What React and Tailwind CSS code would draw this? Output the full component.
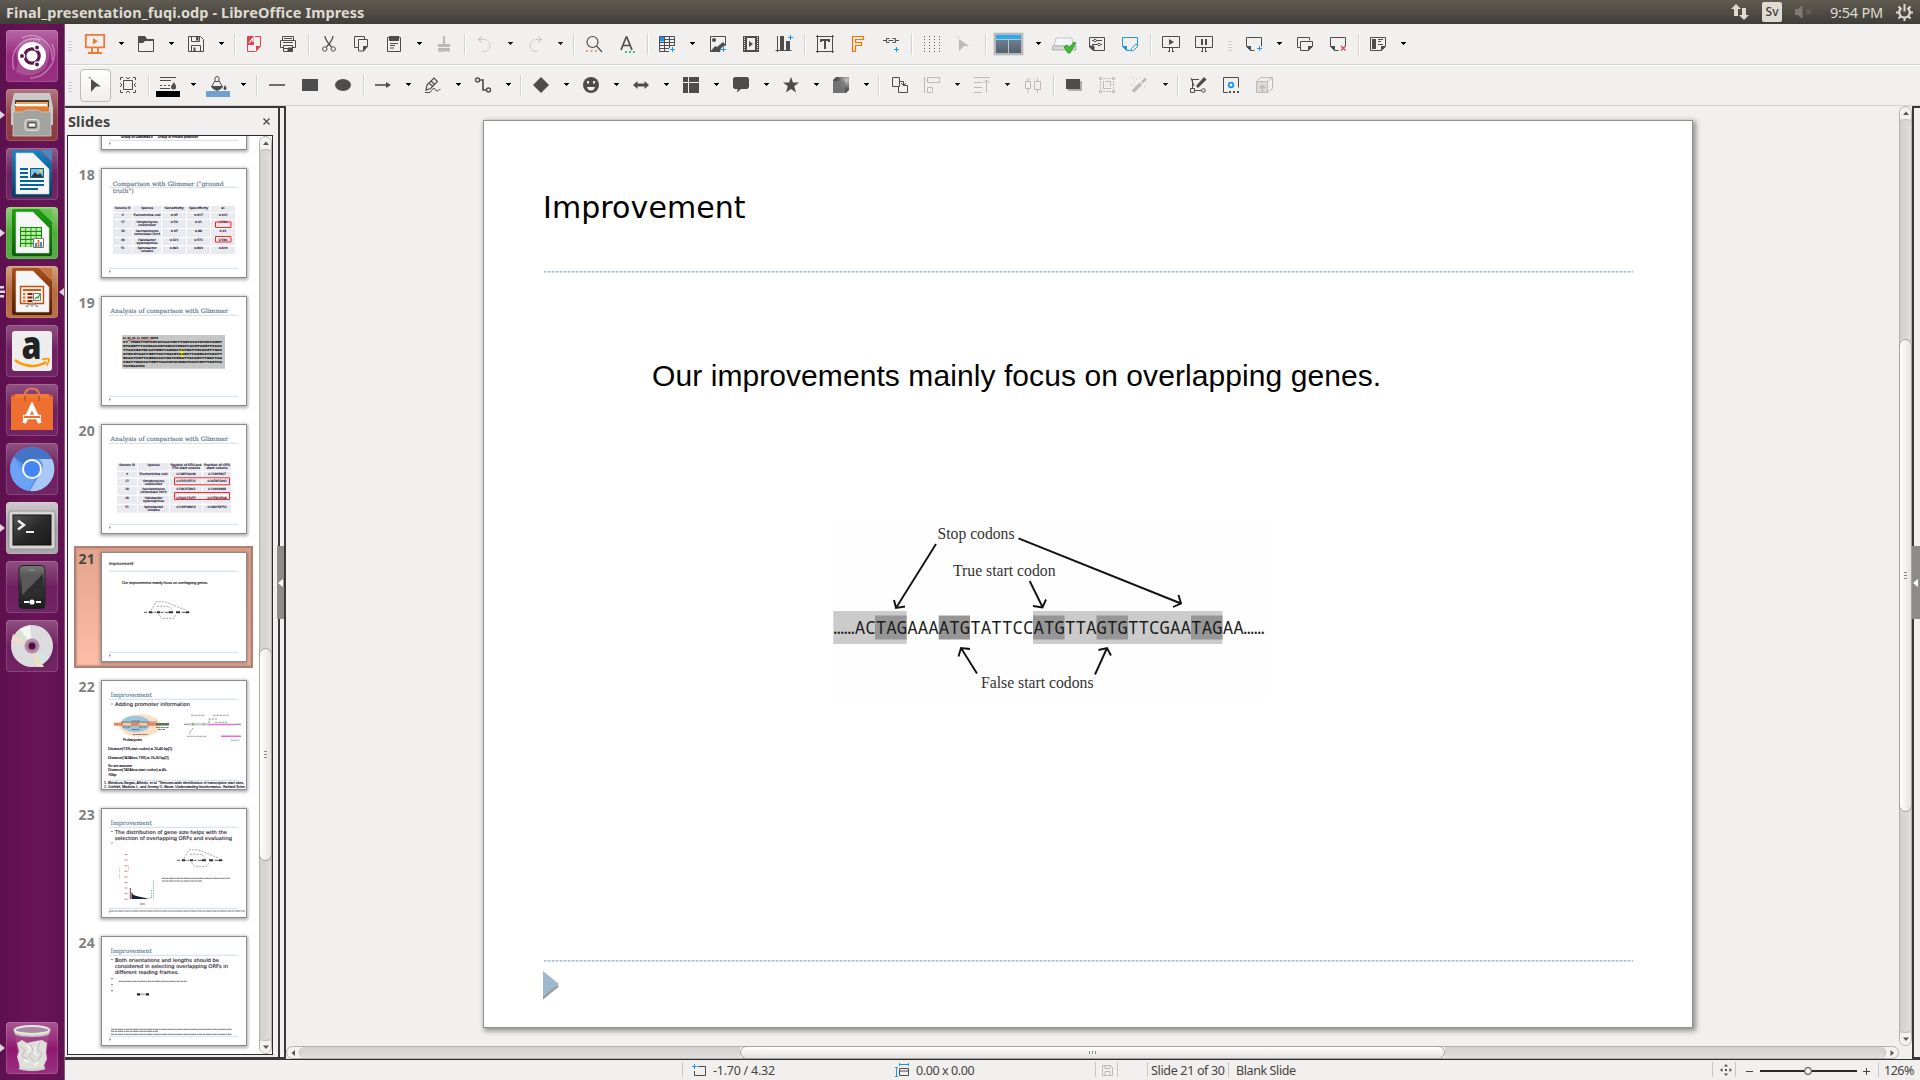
import React from "react";

const D = "#4d4d4d";
const G = "#bcbab8";
const B = "#1e96f0";

/* ---------- toolbar building blocks ---------- */

const Ico = ({ children }) => (
  <div className="flex w-[33px] shrink-0 pl-1">
    <svg width="24" height="24" viewBox="-4 -4 24 24" fill="none" className="overflow-visible">
      {children}
    </svg>
  </div>
);
const Drop = ({ wide, dim }) => (
  <div className={wide ? "w-[18px] shrink-0 pl-[6px]" : "w-[17px] shrink-0 pl-[6px]"}>
    <svg width="5" height="3" viewBox="0 0 5 3" shapeRendering="crispEdges" className="-mt-px block">
      <path d="M0 0h5v1H4v1H3v1H2V2H1V1H0z" fill={dim ? "#222" : "#000"} />
    </svg>
  </div>
);
const sepWidths = { 7: "w-[7px] pl-[3px]", 8: "w-2 pl-[3px]", 9: "w-[9px] pl-1" };
const Sep = ({ w = 8 }) => (
  <div className={`${sepWidths[w]} shrink-0`}>
    <div className="h-[21px] w-[2px] border-l border-[#d5d3d1] bg-white" />
  </div>
);
const Grip = () => (
  <div className="flex w-1 shrink-0 flex-col gap-[2px] pt-[3px]">
    <i className="h-px bg-[#cfcdcb]" />
    <i className="h-px bg-[#cfcdcb]" />
    <i className="h-px bg-[#cfcdcb]" />
    <i className="h-px bg-[#cfcdcb]" />
  </div>
);
const Plus = ({ x, y, c = B }) => <path d={`M${x - 2.5} ${y}h5M${x} ${y - 2.5}v5`} stroke={c} />;
const Sheet = ({ c = D, x = 0, y = 1 }) => (
  <g transform={`translate(${x} ${y})`}>
    <path d="M4.5 13.5 L.5 9.5V.5h15v9M4.5 13.5h4" stroke={c} />
    <path d="M0 9h5v5z" fill={c} />
  </g>
);

/* ---------- standard toolbar icons ---------- */

const StartShow = () => (
  <Ico>
    <g transform="translate(-1 0)">
      <path d="M-1.2 -1.2h18.4v12.6H-1.2z" stroke="#ee7a35" strokeWidth="1.8" />
      <path d="M6 2l5 3.2L6 8.6z" fill="#ee7a35" />
      <path d="M5 12v4M11 12v4M1 17h14" stroke="#ee7a35" strokeWidth="1.8" />
    </g>
  </Ico>
);
const Open = () => (
  <Ico>
    <path d="M.5 .5h6l2 3h7v12H.5z" stroke={D} />
    <path d="M0 0h7l2 3h7v2H7L5 7H0z" fill={D} />
  </Ico>
);
const Save = () => (
  <Ico>
    <path d="M.5 .5h12l3 3v12H.5z" stroke={D} />
    <path d="M3.5 .5v5h8v-5M3.5 15.5v-6h9v6" stroke={D} />
    <path d="M8 1h2.5v3.5H8zM5.5 11.5h2V15h-2z" fill={D} />
  </Ico>
);
const Pdf = () => (
  <Ico>
    <path d="M0 9h7V0H0z" fill="#da4453" />
    <path d="M2 7l4-5v4" stroke="#fff" strokeWidth="1.2" />
    <path d="M8 .5h5.5v10M8.5 15.500h-8V9" stroke="#da4453" />
    <path d="M14 10H9v6z" fill="#da4453" />
  </Ico>
);
const Print = () => (
  <Ico>
    <path d="M2.5 4.5v-4h11v4M.5 4.5h15v7H.5z" stroke={D} />
    <path d="M4 2.5h8M3 6.5h10" stroke={D} />
    <path d="M3.500 9.500h9v6h-9z" fill="#f1f0ee" stroke={D} />
    <path d="M4 12.500h8M8 12h4v3H8z" stroke={D} fill={D} />
  </Ico>
);
const Cut = () => (
  <Ico>
    <g transform="translate(2 0)">
      <path d="M3 0c0 3 2 6 6.500 11M11 0c0 3-2 6-6.500 11" stroke={D} strokeWidth="1.3" />
      <circle cx="2.800" cy="13" r="2.200" stroke={D} />
      <circle cx="11.200" cy="13" r="2.200" stroke={D} />
    </g>
  </Ico>
);
const Copy = () => (
  <Ico>
    <g transform="translate(1 0)">
      <path d="M5 11.500H.5V.5h10v2.500" stroke={D} />
      <path d="M4.500 3.500h9v7l-4 4.500h-5z" stroke={D} />
      <path d="M14 10H9v6z" fill={D} />
    </g>
  </Ico>
);
const Paste = () => (
  <Ico>
    <path d="M1.500 1.500h13v14h-13z" stroke={D} />
    <path d="M3 0h10v5H3z" fill={D} />
    <path d="M4 7.500h8M4 9.500h5M4 12h4" stroke={D} />
  </Ico>
);
const Brush = () => (
  <Ico>
    <path d="M7 0h2v8h5v3H2V8h5zM2 12h12v3.500H2z" fill={G} />
    <path d="M5 16L2 15v-3h10z" fill={G} />
  </Ico>
);
const Undo = ({ flip }) => (
  <Ico>
    <g transform={flip ? "translate(16 0) scale(-1 1)" : undefined}>
      <path d="M2 3.500h5a6 6 0 0 1 0 12H5" stroke={G} strokeDasharray="2 1" />
      <path d="M5 .5l-3.500 3L5 6.500" stroke={G} />
    </g>
  </Ico>
);
const Find = () => (
  <Ico>
    <circle cx="6.500" cy="6" r="5.500" stroke={D} strokeWidth="1.200" />
    <path d="M10.500 10l5.500 6" stroke={D} strokeWidth="1.200" />
    <path d="M0 15h2M4.500 15h2M9 15h2" stroke="#f3937f" strokeWidth="2" />
  </Ico>
);
const Spell = () => (
  <Ico>
    <path d="M2 14L7.200 1h.6L13 14M4 9.500h7" stroke={D} strokeWidth="1.700" />
    <path d="M6 16h2M10 16h2M14 16h2" stroke="#4fb87a" strokeWidth="2" />
  </Ico>
);
const Table = () => (
  <Ico>
    <path d="M.5 .5h15v9.500M.5 .5v15H10M0 3.500h16M0 6.500h16M0 9.500h15M0 12.500h10M5.500 0v16M10.500 0v12" stroke={D} />
    <path d="M1 1h4v4.500H1z" fill={B} />
    <Plus x={13.500} y={13.500} />
  </Ico>
);
const Image = () => (
  <Ico>
    <path d="M9 15.500H.5V.5h15v9" stroke={D} />
    <circle cx="4" cy="4" r="2" fill={D} />
    <path d="M0 16l5-6 2 1 6-5 3 3-5 3-1 4z" fill={D} />
    <Plus x={13.500} y={13.500} />
  </Ico>
);
const Film = () => (
  <Ico>
    <path d="M0 0h16v16H0z" fill={D} />
    <path d="M4 2h8v12H4z" fill="#f1f0ee" />
    <path d="M1.500 1v14M14.500 1v14" stroke="#f1f0ee" strokeDasharray="1 1" />
    <path d="M6 5l4 3-4 3z" fill={D} />
  </Ico>
);
const Chart = () => (
  <Ico>
    <path d="M-.5 14.500h16M1.500 0v16" stroke={D} />
    <path d="M4 0h4v14H4zM10 5h4v9h-4z" fill={D} />
    <Plus x={14.500} y={1.500} />
  </Ico>
);
const TextBox = () => (
  <Ico>
    <path d="M.5 -1v18M15.500 -1v18M-1 .5h18M-1 15.500h18" stroke={D} />
    <path d="M3 3h10v3h-2V5H9v8H7V5H5v1H3z" fill={D} />
  </Ico>
);
const Fontwork = () => (
  <Ico>
    <path d="M2.500 .5h11v3h-8v3h6v3h-6v6h-3z" stroke="#f67400" strokeWidth="1.200" />
  </Ico>
);
const Link = () => (
  <Ico>
    <path d="M0 4.500h3M6.500 2.500h-3v4h3M5.500 4.500h5M9.500 2.500h3v4h-3M13 4.500h3" stroke={D} />
    <Plus x={13.500} y={13.500} />
  </Ico>
);
const Dots = () => (
  <Ico>
    <path d="M.5 0v16M5.500 0v16M10.500 0v16M15.500 0v16" stroke="#5a5a5a" strokeDasharray="1 2" />
  </Ico>
);
const GreyCursor = () => (
  <Ico>
    <path d="M2 3l10 7H7l-5 5z" fill={G} />
    <path d="M0 0h2v2H0z" fill="#dddbd9" />
  </Ico>
);
const Display = () => (
  <div className="flex w-10 shrink-0 pl-1">
    <div className="flex h-[22px] w-[29px] flex-col gap-px border-2 border-[#b9b8b7] bg-[#bfc3c6] shadow-[0_0_0_0.5px_#ccc]">
      <i className="h-1 bg-[#27a9f3]" />
      <div className="flex flex-1 gap-px">
        <i className="flex-1 bg-linear-to-b from-[#6e7f90] to-[#53616e]" />
        <i className="flex-1 bg-linear-to-b from-[#6e7f90] to-[#53616e]" />
      </div>
    </div>
  </div>
);
const Check = () => (
  <Ico>
    <path d="M0 2h16l1 8H-2z" fill="#f4f4fb" stroke="#b5b5b8" strokeWidth=".7" />
    <path d="M-3 10h23v4H-4z" fill="#d8d8d8" stroke="#8f8f8f" strokeWidth=".6" />
    <path d="M8 11l3-2 2 3 5-6 2 1-6 10h-2z" fill="#3fc12f" stroke="#1f8a18" strokeWidth=".7" />
  </Ico>
);
const Props = () => (
  <Ico>
    <path d="M4 14.500L.5 11V1.500h15v13H4z" stroke={D} />
    <path d="M0 10h5v5zM3 4.500h10M3 8.500h10" fill={D} stroke={D} />
    <circle cx="6" cy="4.500" r="1.300" fill="#fff" stroke={D} />
    <circle cx="10" cy="8.500" r="1.300" fill="#fff" stroke={D} />
  </Ico>
);
const Master = () => (
  <Ico>
    <Sheet c={B} />
    <path d="M9 15l.5-2.500L14 8l2 2-4.500 4.500z" stroke={B} fill="#f1f0ee" />
  </Ico>
);
const Present = ({ pause }) => (
  <Ico>
    <path d="M-.5 .5h17v11h-17z" stroke={D} />
    <path d="M6.500 12v3M9.500 12v3M5 15.500h2M9 15.500h2" stroke={D} />
    {pause ? <path d="M5 3h2v6H5zM9 3h2v6H9z" fill={D} /> : <path d="M6 3l5 3-5 3z" fill={D} />}
  </Ico>
);
const NewSlide = () => (
  <Ico>
    <Sheet />
    <Plus x={13.500} y={12.500} />
  </Ico>
);
const DupSlide = () => (
  <Ico>
    <path d="M3 11.500H.5V1.500h12v3" stroke={D} />
    <path d="M3.500 5.500h12v5l-4 4h-8z" stroke={D} />
    <path d="M16 10h-5v5z" fill={D} />
  </Ico>
);
const DelSlide = () => (
  <Ico>
    <Sheet />
    <path d="M11 10l4.500 4.500M15.500 10L11 14.500" stroke="#da4453" strokeWidth="1.300" />
  </Ico>
);
const Layout = () => (
  <Ico>
    <path d="M.5 1.500h15v9l-4 4H.5z" stroke={D} />
    <path d="M2 3h4v10H2zM16 10h-5v5z" fill={D} />
    <path d="M8 3.500h5M8 5.500h3M8 8.500h5" stroke={D} />
  </Ico>
);

/* ---------- drawing toolbar icons ---------- */

const SelectBtn = () => (
  <div className="mr-px flex h-[33px] w-[31px] shrink-0 items-center rounded-[4px] border border-[#bdbbb8] bg-linear-to-b from-white to-[#efeeec] pl-2">
    <svg width="16" height="16" viewBox="0 0 16 16">
      <path d="M2 2l10 7.500H7L2 15z" fill={D} />
      <path d="M0 0h1.500v1.500H0z" fill="#777" />
    </svg>
  </div>
);
const Transform = () => (
  <Ico>
    <path d="M3.500 3.500h9v9h-9z" stroke={D} />
    <path d="M.5 3V.5H3M13 .5h2.500V3M15.500 13v2.500H13M3 15.500H.5V13M6 .5h1M9 .5h1M6 15.500h1M9 15.500h1M.5 6v1M.5 9v1M15.500 6v1M15.500 9v1" stroke={D} />
    <path d="M7 1h2v1H7zM7 14h2v1H7zM1 7h1v2H1zM14 7h1v2h-1z" fill={D} />
  </Ico>
);
const LineColor = () => (
  <Ico>
    <path d="M0 .5h16M0 3.500h11" stroke={D} />
    <path d="M0 8.500h2M4 8.500h2M8 8.500h2M0 11.500h10" stroke={D} />
    <path d="M14 5c1.500 2.500 2 3.500 2 5a2.500 2.500 0 0 1-5 0c0-1.500 1.500-2.500 3-5z" fill={D} />
    <path d="M-4 14h24v6H-4z" fill="#000" />
  </Ico>
);
const FillColor = () => (
  <Ico>
    <path d="M5 5V1.500a2 2 0 0 1 4 0V5" stroke={D} />
    <path d="M4.500 4.500h5l3 5.500-5.500 3-5.500-3z" stroke={D} />
    <path d="M1 9h12l-2 3-4 2-4-2z" fill={D} />
    <path d="M15 8c1.200 2 1.500 2.500 1.500 3.500a1.500 1.500 0 0 1-3 0c0-1 .5-1.500 1.500-3.500z" fill={D} />
    <path d="M-4 14h24v6H-4z" fill="#729fcf" />
  </Ico>
);
const Line = () => (<Ico><path d="M0 8h16" stroke={D} strokeWidth="1.600" /></Ico>);
const Rect = () => (<Ico><path d="M0 2h16v12H0z" fill={D} /></Ico>);
const Oval = () => (<Ico><ellipse cx="8" cy="8" rx="8" ry="6" fill={D} /></Ico>);
const ArrowLine = () => (<Ico><path d="M0 8h12" stroke={D} strokeWidth="1.600" /><path d="M11 5l5 3-5 3z" fill={D} /></Ico>);
const Pencil = () => (
  <Ico>
    <path d="M2 8l7-7 3.500 3.500-7 7L1 13z M4 6l3.500 3.500M6 4l3.500 3.500" stroke={D} strokeWidth="1.200" />
    <path d="M0 15.500h4c3 0 2-4 5-4 2 0 1 2.500 3 2.500 1.500 0 2-2 3.500-1.500" stroke={D} />
  </Ico>
);
const Connector = () => (
  <Ico>
    <circle cx="2.500" cy="3" r="2" stroke={D} strokeWidth="1.400" />
    <circle cx="13.500" cy="13" r="2" stroke={D} strokeWidth="1.400" />
    <path d="M4.500 3H8v10h3.500" stroke={D} strokeWidth="1.600" />
  </Ico>
);
const Diamond = () => (<Ico><path d="M8 0l8 8-8 8-8-8z" fill={D} /></Ico>);
const Smile = () => (
  <Ico>
    <circle cx="8" cy="8" r="8" fill={D} />
    <path d="M4 4h2v2.500H4zM10 4h2v2.500h-2zM4 10h8c-.5 2.500-2 3.500-4 3.500S4.500 12.500 4 10z" fill="#f1f0ee" />
  </Ico>
);
const DblArrow = () => (<Ico><path d="M0 8l4.500-4v2.500h7V4L16 8l-4.500 4V9.500h-7V12z" fill={D} /></Ico>);
const Flow = () => (<Ico><path d="M0 0h5v5H0zM6 0h10v5H6zM0 6h5v10H0zM6 6h10v10H6z" fill={D} /></Ico>);
const Callout = () => (<Ico><path d="M1.500 0h13L16 1.500v8.500L14.500 12H8l-4 3.500.5-3.500h-3L0 10.500v-9z" fill={D} /></Ico>);
const Star = () => (<Ico><path d="M8 0l2 5.500h6L11.200 9.200 13 15.500 8 12l-5 3.500 1.800-6.300L0 5.500h6z" fill={D} /></Ico>);
const Cube = () => (
  <Ico>
    <defs>
      <radialGradient id="cube" cx=".85" cy=".2" r=".6">
        <stop offset="0" stopColor="#c4c4c4" />
        <stop offset="1" stopColor="#505050" />
      </radialGradient>
    </defs>
    <path d="M3 0h13v13l-3 3H0V3z" fill="url(#cube)" />
    <path d="M0 4h12v12H0z" fill="#7a7a7a" opacity=".8" />
  </Ico>
);
const Arrange = () => (
  <Ico>
    <g transform="translate(1 0)">
      <path d="M.5 .5h7v9h-7zM6.500 9v6.500h9v-7H11M8 4.500h3.500v4M9 6l2.500 2.500L14 6" stroke={D} />
    </g>
  </Ico>
);
const Align = () => (<Ico><path d="M.5 0v16M3.500 .5h12v5h-12zM3.500 10.500h5v5h-5z" stroke={G} /></Ico>);
const Align2 = () => (<Ico><path d="M0 .5h16M0 5.500h8M0 10.500h8M0 15.500h8M12.500 3v13M9.500 6l3-3 3 3" stroke={G} /></Ico>);
const Distribute = () => (
  <Ico><path d="M.5 4.500h5v7h-5zM9.500 4.500h6v8h-6zM3 1v3M3 12v4M12.500 1v3M12.500 13v3M5 1.500h1M9 1.500h1" stroke={G} /></Ico>
);
const Shadow = () => (<Ico><path d="M2 4h14v10H2z" fill="#aeadab" /><path d="M0 2h14v10H0z" fill={D} /></Ico>);
const Crop = () => (
  <Ico>
    <path d="M.5 .5h2v2h-2zM13.500 .5h2v2h-2zM.5 13.500h2v2h-2zM13.500 13.500h2v2h-2zM4.500 4v7.500H12M6.500 4.500h5v5" stroke={G} />
    <path d="M4 1.500h9M4 14.500h9M1.500 4v9M14.500 4v9" stroke={G} strokeDasharray="2 1" />
  </Ico>
);
const Wand = () => (
  <Ico>
    <g transform="translate(-1 0)">
      <path d="M2 14.500L10 6.500" stroke={G} strokeWidth="3.200" />
      <path d="M11 5.500L15 1.500" stroke={G} strokeWidth="2.600" />
      <path d="M1 1h1M5 2h1M3 5h1M0 8h1M13 10h1M8 1h1" stroke={G} />
    </g>
  </Ico>
);
const Points = () => (
  <Ico>
    <path d="M2.500 2v11M1 2.500h8M4 13.500h8" stroke={D} />
    <path d="M7 9L14 1l1.500 1.500L8 10z" fill={D} stroke={D} strokeWidth="1.500" />
    <path d="M.5 11.500h4v4h-4zM1 1l3 8" stroke={D} fill="#f1f0ee" />
    <circle cx="13.500" cy="13.500" r="1.800" stroke={D} />
  </Ico>
);
const Glue = () => (
  <Ico>
    <path d="M5 15.500H.5V.5h15v10" stroke={D} />
    <circle cx="8" cy="8" r="2.300" stroke={B} strokeWidth="1.800" />
    <path d="M6 15h2M10 15h2M14 15h2" stroke={D} strokeWidth="2" />
  </Ico>
);
const Extrude = () => (
  <Ico>
    <path d="M.5 4.500h11v11H.5z" fill="#dcdbd9" stroke={G} />
    <path d="M.5 4.500l4-4h12l-5 4M16.500 .5v11l-5 4" stroke={G} />
    <path d="M6.500 15V9M4 11l2.500-2.500L9 11" stroke={G} strokeWidth="1.500" />
  </Ico>
);

/* ---------- launcher ---------- */

const Doc = ({ dark, mid, light, children }) => (
  <svg width="52" height="52" viewBox="0 0 52 52">
    <defs>
      <linearGradient id={`doc${dark}`} x1="0" y1="0" x2="0" y2="1">
        <stop offset="0" stopColor={mid} />
        <stop offset="1" stopColor={dark} />
      </linearGradient>
    </defs>
    <path d="M8 2h25l13 13v32a2 2 0 0 1-2 2H8a2 2 0 0 1-2-2V4a2 2 0 0 1 2-2z" fill={`url(#doc${dark})`} />
    <path d="M34 2h12v12z" fill={light} opacity=".75" />
    <path d="M10 5h17l16 16v25H10z" fill="#f6f6f6" stroke="#d5d5d5" strokeWidth=".6" />
    {children}
  </svg>
);

const Ubuntu = () => (
  <svg width="52" height="52" viewBox="0 0 52 52">
    <path d="M8 40C2 20 18 4 34 10M46 14c8 16-6 34-22 34M16 8c16-8 32 6 30 22" stroke="#fff" strokeOpacity=".35" strokeWidth="1.500" fill="none" />
    <path d="M12 32C6 16 20 6 34 8c10 4 12 18 6 28-6 10-20 12-30 6z" fill="#fff" opacity=".16" />
    <circle cx="26" cy="26" r="14" fill="#fff" />
    <circle cx="26" cy="26" r="7.200" fill="none" stroke="#5e1a4c" strokeWidth="3.200" />
    <g stroke="#fff" strokeWidth="1.300">
      <circle cx="16" cy="26" r="2.600" fill="#5e1a4c" />
      <circle cx="31" cy="17.500" r="2.600" fill="#5e1a4c" />
      <circle cx="31" cy="34.500" r="2.600" fill="#5e1a4c" />
    </g>
  </svg>
);
const Files = () => (
  <svg width="52" height="52" viewBox="0 0 52 52">
    <path d="M8 4h36l3 14v18H5V18z" fill="#c9c9c7" />
    <path d="M9 11h34v14H9z" fill="#4b3a30" />
    <path d="M10 13h32v12H10z" fill="#f0a05a" />
    <path d="M9 15h32v2H9z" fill="#fff" />
    <path d="M9 18h34v8H9z" fill="#e07a34" />
    <path d="M7 23h10l3-2h12l3 2h10v24H7z" fill="#a3a3a0" stroke="#c8c8c6" strokeWidth=".8" />
    <rect x="19" y="30.500" width="14" height="11" rx="2.500" fill="#b5b5b2" stroke="#e4e4e2" />
    <rect x="22" y="33.500" width="8" height="5" rx="1" fill="#eee" stroke="#4a4a4a" strokeWidth="1.300" />
  </svg>
);
const Writer = () => (
  <Doc dark="#023d63" mid="#1c83c0" light="#3f9ad2">
    <path d="M14 21h8M14 25h8M14 29h8M14 33h24M14 37h24M14 41h18" stroke="#02659c" strokeWidth="1.900" />
    <path d="M24.500 20.500h13v9h-13z" fill="#7cc4e8" stroke="#0a5c8c" />
    <path d="M25 29l4-5 3 3 2-2 3 4z" fill="#333" />
    <circle cx="35" cy="23" r="1.500" fill="#f6d743" />
  </Doc>
);
const Calc = () => (
  <Doc dark="#085c08" mid="#1fa00f" light="#4fc63c">
    <path d="M14 20h22v20H14z" fill="#128a0a" />
    <g fill="#baf0a4">
      {[21, 25, 29, 33, 37].map((y) => [15, 20.200, 25.400, 30.600].map((x) => (
        <rect key={`${x}-${y}`} x={x} y={y} width="4.300" height="2.900" />
      )))}
    </g>
    <path d="M27.500 31.500h10v9h-10z" fill="#fff" stroke="#777" />
    <path d="M29 36h2v4h-2z" fill="#3a8fd0" />
    <path d="M31.500 33h2v7h-2z" fill="#f07b28" />
    <path d="M34 35h2v5h-2z" fill="#3a8fd0" />
  </Doc>
);
const Impress = () => (
  <Doc dark="#521c00" mid="#a94f1a" light="#c46a2e">
    <path d="M14.500 20.500h23v17h-23z" fill="#fff1e8" stroke="#c0501a" strokeWidth="1.400" />
    <path d="M17 24h18" stroke="#d0591f" strokeWidth="1.800" />
    <path d="M17 28h2.500M17 31.500h2.500M17 35h2.500" stroke="#e8722a" strokeWidth="2" />
    <path d="M21.500 28h5M21.500 31.500h5M21.500 35h5" stroke="#7c2500" strokeWidth="2" />
    <path d="M27.500 27.500h7v7h-7z" fill="#fff" stroke="#777" />
    <path d="M29 33l2-2 1 1 2-4" stroke="#2e9d2e" strokeWidth="1.200" fill="none" />
    <path d="M20 41l4-3h4l4 3M26 38v3" stroke="#9a9a9a" strokeWidth="1.500" fill="none" />
  </Doc>
);
const Amazon = () => (
  <svg width="52" height="52" viewBox="0 0 52 52">
    <rect x="6" y="6" width="40" height="40" rx="3" fill="#ededed" />
    <text x="25.500" y="34" textAnchor="middle" fontFamily="Open Sans, Noto Sans, sans-serif" fontWeight="800" fontSize="38" textLength="20" lengthAdjust="spacingAndGlyphs" fill="#222">a</text>
    <path d="M9 35c9 7 22 8 31 2" stroke="#f90" strokeWidth="2.600" fill="none" />
    <path d="M36 34.500c3-1 6-1 7-.5 0 2-1 4.500-2.500 6.500" stroke="#f90" strokeWidth="1.700" fill="none" />
  </svg>
);
const Software = () => (
  <svg width="52" height="52" viewBox="0 0 52 52">
    <path d="M19 16V10a7 5.500 0 0 1 14 0v6" fill="none" stroke="#e87850" strokeWidth="2.200" />
    <path d="M5 12l5-2h32l5 2v33H5z" fill="#f07a3a" />
    <path d="M5 14h42v32H5z" fill="#ee6f30" />
    <path d="M5 10l5 3H5zM47 10l-5 3h5z" fill="#c95220" />
    <path d="M19 17v-5M33 17v-5" stroke="#c9552a" strokeWidth="2.200" />
    <path d="M18 39L26 22l8 17" fill="none" stroke="#fff" strokeWidth="4" />
    <path d="M17 33h18" stroke="#fff" strokeWidth="4.500" />
    <path d="M18 33h16" stroke="#ee6f30" strokeWidth="1.800" />
  </svg>
);
const Chromium = () => (
  <svg width="52" height="52" viewBox="0 0 52 52">
    <circle cx="26" cy="26" r="22" fill="#5a93f0" />
    <path d="M26 4A22 22 0 0 1 46 16H26a10 10 0 0 0-9 5L8 14A22 22 0 0 1 26 4z" fill="#4573c6" />
    <path d="M46 16a22 22 0 0 1-22 32l10-17a10 10 0 0 0-1-15z" fill="#a9c8f8" />
    <path d="M8 14l9 17a10 10 0 0 0 12 4l-6 13A22 22 0 0 1 8 14z" fill="#6ba2f6" />
    <circle cx="26" cy="26" r="10" fill="#fff" />
    <circle cx="26" cy="26" r="8" fill="#4286f5" />
  </svg>
);
const Terminal = () => (
  <svg width="52" height="52" viewBox="0 0 52 52">
    <defs>
      <linearGradient id="term" x1="0" y1="0" x2="1" y2="1">
        <stop offset="0" stopColor="#555" />
        <stop offset=".5" stopColor="#2a2a2a" />
        <stop offset="1" stopColor="#1a1a1a" />
      </linearGradient>
    </defs>
    <rect x="3" y="9" width="46" height="38" rx="2" fill="#d6d6d2" stroke="#888" strokeWidth=".8" />
    <rect x="7" y="13" width="38" height="30" fill="url(#term)" stroke="#111" />
    <path d="M12 18.500l6 4.500-6 4.500" stroke="#eee" strokeWidth="2.400" fill="none" />
    <path d="M20 30h8" stroke="#eee" strokeWidth="2" />
  </svg>
);
const Phone = () => (
  <svg width="52" height="52" viewBox="0 0 52 52">
    <defs>
      <linearGradient id="phone" x1="0" y1="0" x2="0" y2="1">
        <stop offset="0" stopColor="#777" />
        <stop offset=".5" stopColor="#333" />
        <stop offset="1" stopColor="#1c1c1c" />
      </linearGradient>
    </defs>
    <rect x="13" y="4.500" width="26" height="43" rx="4" fill="url(#phone)" stroke="#222" />
    <path d="M16 13h21v23H16z" fill="#2e2e2e" />
    <path d="M16 13h21L16 34z" fill="#6c6c6c" opacity=".7" />
    <path d="M23 9h6" stroke="#999" />
    <path d="M18 41h5M30 41h5" stroke="#fff" strokeWidth="2" />
    <circle cx="26" cy="41" r="2.600" fill="#fff" />
  </svg>
);
const Disc = () => (
  <svg width="52" height="52" viewBox="0 0 52 52">
    <circle cx="26" cy="26" r="21" fill="#dcdcdc" />
    <path d="M26 26L10 13l5-5z" fill="#d4e6d0" />
    <path d="M26 26L5 22l2-8z" fill="#f0d9cf" />
    <path d="M26 26L42 39l-5 5z" fill="#cfe8e6" />
    <path d="M26 26l4 21h8z" fill="#eadfc4" />
    <path d="M26 26L14 9l10-4z" fill="#f4f4f4" />
    <circle cx="26" cy="26" r="7.500" fill="#b88aa6" />
    <circle cx="26" cy="26" r="4.500" fill="#8e6584" />
    <circle cx="26" cy="26" r="3.200" fill="#4d0f40" />
  </svg>
);
const Trash = () => (
  <svg width="52" height="52" viewBox="0 0 52 52">
    <path d="M9 12h34l-4 34H13z" fill="#b86aa0" opacity=".35" />
    <path d="M11 21l5-3 5 3 4-1 5-1 6-1 5 3-1 9 1 7-3 6 1 4c-4 2-21 2-25 0l-1-6-2-6 2-6z" fill="#dededa" />
    <path d="M14 24l5 4-3 6 6 3M24 22l4 7-5 5 6 6M34 21l-3 6 5 5-5 8" stroke="#bdbdb9" strokeWidth="1" fill="none" />
    <path d="M20 23l4 3-2 5M30 25l-2 5 4 4M18 38l5 2M28 43l5-3" stroke="#f6f6f4" strokeWidth="1.500" fill="none" />
    <path d="M13 46c4 2.500 22 2.500 26 0" stroke="#cfcfcf" strokeWidth="2" fill="none" />
    <path d="M8.500 8c2 6 33 6 35 0v3.500c-2 4.500-33 4.500-35 0z" fill="#c9c9c5" />
    <ellipse cx="26" cy="8" rx="17.500" ry="4" fill="#a98ba0" stroke="#e6e6e2" strokeWidth="2" />
  </svg>
);

const tiles = [
  { Icon: Ubuntu, cls: "from-[#b567a3] via-[#97287e] to-[#98307f]" },
  { Icon: Files, cls: "from-[#b0787f] via-[#914048] to-[#8c3a42]", run: 1 },
  { Icon: Writer, cls: "from-[#8f5a86] via-[#6c2060] to-[#702565]" },
  { Icon: Calc, cls: "from-[#8fcf78] via-[#4fae38] to-[#58a848]", run: 1 },
  { Icon: Impress, cls: "from-[#d0a080] via-[#b66c3e] to-[#b87048]", run: 3, active: true },
  { Icon: Amazon, cls: "from-[#8f5080] via-[#6e1f60] to-[#702565]" },
  { Icon: Software, cls: "from-[#8f5080] via-[#6e1f60] to-[#702565]" },
  { Icon: Chromium, cls: "from-[#8f5080] via-[#6e1f60] to-[#702565]" },
  { Icon: Terminal, cls: "from-[#d0c8cc] via-[#aaa0a6] to-[#aca4a8]", run: 1 },
  { Icon: Phone, cls: "from-[#8f5080] via-[#6e1f60] to-[#702565]" },
  { Icon: Disc, cls: "from-[#8f5080] via-[#6e1f60] to-[#702565]" },
];
const Pip = () => (
  <svg width="5" height="8" viewBox="0 0 5 8"><path d="M0 0l5 4-5 4z" fill="#dcd4da" /></svg>
);
const Tile = ({ Icon, cls, run, active }) => (
  <div className="flex h-[52px] items-center">
    <div className="flex w-[6px] shrink-0 flex-col">
      {run === 1 && <Pip />}
      {run === 3 && (
        <svg width="5" height="12" viewBox="0 0 5 12">
          <path d="M0 0h4v2.500H0zM0 4.500h5V7H0zM0 9h4v2.500H0z" fill="#dcd4da" />
        </svg>
      )}
    </div>
    <div className={`h-[52px] w-[52px] shrink-0 overflow-hidden rounded-[4px] bg-linear-to-b shadow-[inset_0_0_0_1px_rgba(255,255,255,0.15)] ${cls}`}>
      <Icon />
    </div>
    {active && (
      <svg width="5" height="8" viewBox="0 0 5 8" className="ml-px"><path d="M5 0L0 4l5 4z" fill="#dcd4da" /></svg>
    )}
  </div>
);

/* ---------- slide thumbnails ---------- */

const T = ({ x, y, w, s = 5, c = "#2a2430", f = "DejaVu Sans, sans-serif", a, b, children }) => (
  <text x={x} y={y} fontSize={s} fill={c} stroke={c} strokeWidth=".14" fontFamily={f} fontWeight={b ? 700 : 400}
    textAnchor={a} textLength={w} lengthAdjust="spacingAndGlyphs">{children}</text>
);
const Heading = ({ w, x = 9.500, y = 16.800, c = "#62707e", children }) => (
  <T x={x} y={y} w={w} s={6} c={c} f="DejaVu Serif, serif">{children}</T>
);
const Rule = ({ y }) => <path d={`M8 ${y}h129`} stroke="#c9dae6" strokeWidth=".9" />;
const Foot = () => (
  <>
    <Rule y={100.300} />
    <path d="M8.300 102l1.500 1.500-1.500 1.500z" fill="#64788c" />
  </>
);
const Bullets = ({ ys }) => ys.map((y) => <path key={y} d={`M10 ${y}h2`} stroke="#7b96b4" strokeWidth="1.200" />);
const Grid = ({ cols, rows }) => (
  <>
    {rows.map((r) => cols.map(([x0, x1], i) => (
      <g key={`${r.y}-${x0}`}>
        <rect x={x0} y={r.y} width={x1 - x0} height={r.h} fill="#e9eaef" />
        {r.t[i].map((line, k) => (
          <T key={line} x={(x0 + x1) / 2} y={r.y + 2.900 + k * 3} s={3} a="middle" c="#1c1030"
            w={Math.min(x1 - x0 - 1, line.length * 1.75)}>{line}</T>
        ))}
      </g>
    )))}
  </>
);
const MiniGraph = ({ x, y }) => (
  <g transform={`translate(${x} ${y})`}>
    <path d="M0 0h48" stroke="#777" strokeWidth="1.300" strokeDasharray="3 1.500 5 1 2 4" />
    <path d="M5 0h3M13 0h3M25 0h4M32 0h4M42 0h3" stroke="#333" strokeWidth="2" />
    <path d="M7-2l5-8.500h9l20 8M13-6h12l3 4M14 2l4 4h12l2-4" stroke="#666" strokeWidth=".6" strokeDasharray="2 1.200" fill="none" />
  </g>
);
const Noise = ({ x, y, w }) => (
  <path d={`M${x} ${y}h${w}`} stroke="#555" strokeWidth=".8" strokeDasharray="3.500 .4 2.500 .5 5.500 .4 1.500 .3" />
);

const S17 = () => (
  <>
    <T x={20} y={98} w={32} s={3.600} b>Group of Genomes E</T>
    <T x={57} y={98} w={40} s={3.600} b>Group of Protein predictor</T>
    <Foot />
  </>
);
const S18 = () => (
  <>
    <Rule y={19.300} />
    <Heading x={11.700} y={17.700} w={111}>Comparison with Glimmer ("ground</Heading>
    <Heading x={11.700} y={24.500} w={21}>truth")</Heading>
    <Grid
      cols={[[12, 31.300], [32, 60], [61.300, 85], [86, 109], [110, 134]]}
      rows={[
        { y: 38, h: 6, t: [["Genome ID"], ["Species"], ["Sensitivity"], ["Specificity"], ["AC"]] },
        { y: 45, h: 6, t: [["9"], ["Escherichia coli"], ["0.95"], ["0.917"], ["0.922"]] },
        { y: 52, h: 8, t: [["17"], ["Streptomyces", "coelicolor"], ["0.59"], ["0.61"], ["0.589"]] },
        { y: 61, h: 8, t: [["28"], ["Saccharomyces", "cerevisiae chr4"], ["0.97"], ["0.88"], ["0.91"]] },
        { y: 70, h: 7, t: [["48"], ["Halobacter", "xylanophilus"], ["0.623"], ["0.571"], ["0.586"]] },
        { y: 78.500, h: 7.500, t: [["51"], ["Spirobacter", "comatus"], ["0.801"], ["0.869"], ["0.829"]] },
      ]}
    />
    <path d="M114.500 54h15.500v5.500h-15.500zM114.500 68.500h15.500v5.500h-15.500z" fill="none" stroke="#f22" />
    <Foot />
  </>
);
const codes = [
  "A+ NC_02 11 start G0675",
  "CT'TRGATTGTCGTATCACTGCTTAGTCCATGTGCTAGGT",
  "GTAGGTTTACGAACCGTAGCATGGATCACGTAGGTTCAAC",
  "TTAACGATGCAATGGCTAGGACTATGATTGCACGTTGAC",
  "ATGCGTAACTGGTTACTGACGTAAGCTTAGGCATCGATT",
  "GCAATCGTTAGGACCATGATCGGATTACAGCTTGACTAA",
  "CGATTGACCATGGTTAACGTACGGATCCATGCTTAGTCA",
  "TATGAATAC",
];
const S19 = () => (
  <>
    <Rule y={19.300} />
    <Heading w={117.500}>Analysis of comparison with Glimmer</Heading>
    <path d="M21 39h103v33.700H21z" fill="#c6c6c6" />
    <path d="M79 55h3.700v5.700H79z" fill="#f6ee00" />
    {codes.map((line, i) => (
      <T key={line} x={22} y={43.400 + i * 4} w={i === 0 ? 35 : i === 7 ? 22 : 99} s={3.400} c="#222" b
        f="Liberation Mono, monospace">{line}</T>
    ))}
    <path d="M26 44h26" stroke="#d33" strokeWidth=".5" />
    <Foot />
  </>
);
const S20 = () => (
  <>
    <Rule y={19.300} />
    <Heading w={117.500} y={17.200}>Analysis of comparison with Glimmer</Heading>
    <Grid
      cols={[[16, 36], [37, 68], [69, 101], [102, 130]]}
      rows={[
        { y: 39, h: 7.700, t: [["Genome ID"], ["Species"], ["Fraction of GTG and", "TTG start codons"], ["Fraction of GTG", "start codons"]] },
        { y: 47.700, h: 5.800, t: [["9"], ["Escherichia coli"], ["0.188760098"], ["0.13895867"]] },
        { y: 54.700, h: 7.200, t: [["17"], ["Streptomyces", "coelicolor"], ["0.454545532"], ["0.407851893"]] },
        { y: 63, h: 7.700, t: [["28"], ["Saccharomyces", "cerevisiae chr4"], ["0.186353861"], ["0.10848988"]] },
        { y: 72, h: 7.700, t: [["48"], ["Halobacter", "xylanophilus"], ["0.500217057"], ["0.437829508"]] },
        { y: 81, h: 7.700, t: [["51"], ["Spirobacter", "comatus"], ["0.249598819"], ["0.188358754"]] },
      ]}
    />
    <path d="M73.500 53.800h55v7h-55zM73.500 68.500h55v7h-55z" fill="none" stroke="#f22" />
    <Foot />
  </>
);
const S21 = () => (
  <>
    <T x={8} y={13} w={24.500} s={4} c="#111">Improvement</T>
    <Rule y={19.300} />
    <T x={21} y={32} w={86} s={4} c="#111" f="Liberation Sans, sans-serif">Our improvements mainly focus on overlapping genes.</T>
    <MiniGraph x={43} y={60.300} />
    <Foot />
  </>
);
const Sm = ({ y, w, x = 7, children }) => (
  <T x={x} y={y} w={w} s={3.900} c="#0c0818" f="Liberation Sans, sans-serif">{children}</T>
);
const S22 = () => (
  <>
    <Rule y={19.300} />
    <Heading w={41.500} c="#5b7f9c">Improvement</Heading>
    <Bullets ys={[24]} />
    <T x={14} y={26} w={75} s={5}>Adding promoter information</T>
    <ellipse cx="39" cy="45.500" rx="20.700" ry="11.300" fill="#fbe0c4" />
    <ellipse cx="34.500" cy="44" rx="14.700" ry="8.200" fill="#9cc6de" />
    <path d="M20 42h36" stroke="#456" strokeWidth=".6" />
    <path d="M13 44.300h42" stroke="#f0805c" strokeWidth="3" />
    <path d="M22 44.300h8M38 44.300h8" stroke="#f8d9a0" strokeWidth="2" />
    <path d="M55 44.300h11l2 0" stroke="#4b7a4a" strokeWidth="2.500" />
    <path d="M22 47h8M38 47h8M31 41h8M31 49.500h7M32 54.500h15M55 47.500h13M57 49.500h7" stroke="#556" strokeWidth=".8" strokeDasharray="2 .5" />
    <Sm x={22} y={61} w={19}>Prokaryotes</Sm>
    <path d="M83 44.300h57" stroke="#444" strokeWidth=".7" />
    <path d="M87 44.300h22" stroke="#ccc" strokeWidth="2.400" />
    <path d="M91 44.300h2M102 44.300h1" stroke="#7bc25b" strokeWidth="2.400" />
    <path d="M108 44.600h27M120 56.300h20" stroke="#e76be0" strokeWidth="1.400" />
    <path d="M90 35.300h14M112 35.300h16M114 42.300h12M86 56.300h20M130 60.300h8M92 48l-4 6M108 43v-4h8" stroke="#555" strokeWidth=".6" strokeDasharray="2.500 .8" fill="none" />
    <Sm y={70} w={65}>Distance(TSS,start codon) = 20-40 bp[1].</Sm>
    <Sm y={79} w={61.500}>Distance(TATAbox,TSS) = 25-30 bp[2].</Sm>
    <Sm y={87} w={24}>So we assume</Sm>
    <Sm y={91} w={59}>Distance(TATAbox,start codon) = 45-</Sm>
    <Sm y={96} w={8.500}>70bp</Sm>
    <Rule y={100.300} />
    <Sm x={3} y={104} w={140}>1. Mendoza-Vargas, Alfredo, et al. "Genome-wide identification of transcription start sites,</Sm>
    <Sm x={3} y={108} w={141}>2. Zvelebil, Marketa J., and Jeremy O. Baum. Understanding bioinformatics. Garland Scien</Sm>
  </>
);
const S23 = () => (
  <>
    <Rule y={19.300} />
    <Heading w={41.500} c="#5b7f9c">Improvement</Heading>
    <Bullets ys={[23.500, 35]} />
    <T x={14} y={25.800} w={112}>The distribution of gene size helps with the</T>
    <T x={14} y={31.800} w={117}>selection of overlapping ORFs and evaluating</T>
    <MiniGraph x={76} y={52.300} />
    <path d="M25 46v46" stroke="#d58088" strokeWidth="3" strokeDasharray="1 4.600" />
    <path d="M18.500 61v10M27.500 57v6" stroke="#d99" strokeWidth=".8" strokeDasharray="1 1" />
    <path d="M29.300 80v11" stroke="#b01d2a" />
    <path d="M30.500 91v-7l2 3 3 1 4 1 5 1 3 1z" fill="#123" />
    <path d="M47 90.500l4-1M50.500 82v8M52.500 72v20" stroke="#699" strokeWidth=".7" strokeDasharray="1.500 1" />
    <path d="M39 96h5" stroke="#777" />
    <Noise x={61} y={70.300} w={68} />
    <Noise x={61} y={73} w={40} />
    <Foot />
    <Noise x={10} y={103} w={134} />
  </>
);
const S24 = () => (
  <>
    <Rule y={19.300} />
    <Heading w={41.500} c="#5b7f9c">Improvement</Heading>
    <Bullets ys={[23.500, 42.700, 48.700, 54.700]} />
    <T x={14} y={25.800} w={104}>Both orientations and lengths should be</T>
    <T x={14} y={31.800} w={113}>considered in selecting overlapping ORFs in</T>
    <T x={14} y={37.800} w={64}>different reading frames.</T>
    <Noise x={17.500} y={45.300} w={68} />
    <path d="M36 58.300h3M45 58.300h3" stroke="#222" strokeWidth="2.200" />
    <path d="M39 58.300h6" stroke="#bbb" strokeWidth="2" />
    <Noise x={10} y={93.300} w={121} />
    <Noise x={10} y={95.300} w={47} />
    <Noise x={10} y={98.300} w={121} />
    <Foot />
  </>
);

const slides = [[17, S17], [18, S18], [19, S19], [20, S20], [21, S21], [22, S22], [23, S23], [24, S24]];

const Thumb = ({ n, Body }) => {
  const on = n === 21;
  return (
    <div
      className={`flex h-[122px] w-[179px] shrink-0 ${on ? "bg-linear-to-b from-[#e2a48c] to-[#fdbfa9] shadow-[inset_0_0_0_2px_#ad8173,inset_0_0_2px_3px_#cf9482]" : ""}`}
    >
      <div className={`flex w-[27px] justify-end pt-[4px] pr-[6px] font-['Noto_Sans','Open_Sans',sans-serif] text-[14px]/[18px] font-bold ${on ? "text-[#4a4542]" : "text-[#7f7f7f]"}`}>
        <span className="tracking-[0.3px]">{n}</span>
      </div>
      <div className="mt-[6px] h-[110px] w-[146px] overflow-hidden border border-[#8c8c90] bg-white shadow-[0_1px_3px_1px_rgba(0,0,0,0.32)]">
        <svg width="144" height="108" viewBox="1 1 144 108"><Body /></svg>
      </div>
    </div>
  );
};

/* ---------- scrollbars ---------- */

const Tri = ({ d }) => <svg width="6" height="6" viewBox="0 0 6 6"><path d={d} fill="#5a5856" /></svg>;
const VBar = ({ before, size }) => (
  <div className="flex w-[13px] shrink-0 flex-col rounded-full border border-[#b3b0ad] bg-[#dad8d6]">
    <div className="flex h-3 items-center justify-center rounded-t-full bg-[#f3f2f1]"><Tri d="M0 5L3 1.500 6 5z" /></div>
    <div className={`${before} rounded-t-full border-t border-[#bfbcb9] bg-linear-to-r from-[#d2d0ce] to-[#e0dfdd]`} />
    <div className={`${size} -mx-px flex flex-col items-center justify-center gap-[2px] rounded-full border border-[#a5a2a0] bg-linear-to-r from-white to-[#e4e3e1]`}>
      <i className="h-px w-[3px] bg-[#8a8886]" />
      <i className="h-px w-[3px] bg-[#8a8886]" />
      <i className="h-px w-[3px] bg-[#8a8886]" />
    </div>
    <div className="flex-1 rounded-b-full border-b border-[#bfbcb9] bg-linear-to-r from-[#d2d0ce] to-[#e0dfdd]" />
    <div className="flex h-3 items-center justify-center rounded-b-full bg-[#f3f2f1]"><Tri d="M0 1.500h6L3 5z" /></div>
  </div>
);
const HBar = () => (
  <div className="mr-[13px] flex h-[13px] shrink-0 rounded-full border border-[#b3b0ad] bg-[#f3f2f1]">
    <div className="flex w-3 items-center justify-center"><Tri d="M5 0L1.500 3 5 6z" /></div>
    <div className="w-[441px] rounded-l-full border-l border-[#bfbcb9] bg-linear-to-b from-[#d2d0ce] to-[#e0dfdd]" />
    <div className="-my-px flex w-[705px] items-center justify-center gap-[2px] rounded-full border border-[#a5a2a0] bg-linear-to-b from-white to-[#e4e3e1]">
      <i className="h-[3px] w-px bg-[#8a8886]" />
      <i className="h-[3px] w-px bg-[#8a8886]" />
      <i className="h-[3px] w-px bg-[#8a8886]" />
    </div>
    <div className="flex-1 rounded-r-full border-r border-[#bfbcb9] bg-linear-to-b from-[#d2d0ce] to-[#e0dfdd]" />
    <div className="flex w-3 items-center justify-center"><Tri d="M1.500 0L5 3 1.500 6z" /></div>
  </div>
);

/* ---------- codon figure on the slide ---------- */

const Codons = () => (
  <svg width="434" height="181" viewBox="832 519 434 181" className="block">
    <path d="M832 519h434v181H832z" fill="#fefefe" />
    <path d="M833.300 611h73.400v33h-73.400zM1033 611h189.500v33H1033z" fill="#cbcbcb" />
    <path d="M875 615.500h31.700v24H875zM938.700 615.500H970v24h-31.300zM1033 615.500h31.500v24H1033zM1096.500 615.500h31.500v24h-31.500zM1191 615.500h31.500v24H1191z" fill="#969696" />
    <g fill="#1c1c1c" fontFamily="Noto Sans Mono, DejaVu Sans Mono, monospace" fontSize="17.500">
      <text x="833.500" y="634" textLength="21" lengthAdjust="spacingAndGlyphs">……</text>
      <text x="854.700" y="634" textLength="389" lengthAdjust="spacingAndGlyphs">ACTAGAAAATGTATTCCATGTTAGTGTTCGAATAGAA</text>
      <text x="1243.500" y="634" textLength="21" lengthAdjust="spacingAndGlyphs">……</text>
    </g>
    <g fill="#333" fontFamily="Liberation Serif, serif" fontSize="16">
      <text x="937.500" y="539.300" textLength="77" lengthAdjust="spacingAndGlyphs">Stop codons</text>
      <text x="953" y="575.600" textLength="102.500" lengthAdjust="spacingAndGlyphs">True start codon</text>
      <text x="981" y="687.800" textLength="112.500" lengthAdjust="spacingAndGlyphs">False start codons</text>
    </g>
    <g fill="none" stroke="#111" strokeWidth="1.900">
      <path d="M936 544l-40 64M894 600l2 8 9-1.500" />
      <path d="M1018.500 538.300L1181 603.500M1178.500 595l2.500 8.500-8 3.500" />
      <path d="M1029.700 581l12.800 26M1033 606l9.500 1.500 3.500-8" />
      <path d="M977 673.500l-16-25.500M958.500 656.500l2.500-8.500 9 1" />
      <path d="M1095 674.500l12-26.500M1098.500 650l8.500-2 4 7.500" />
    </g>
  </svg>
);

const Dotted = () => (
  <div className="w-[1089px]">
    <div className="h-px bg-[repeating-linear-gradient(90deg,#a3bdd1_0_2px,#dbe6ee_2px_4px)]" />
    <div className="h-px bg-[repeating-linear-gradient(90deg,#c8d8e4_0_2px,#f0f4f8_2px_4px)]" />
  </div>
);

const StatusSep = ({ cls = "" }) => <i className={`mt-[2px] h-[15px] w-px shrink-0 bg-[#c9c6c3] ${cls}`} />;

export default function App() {
  return (
    <div className="flex h-[1080px] w-[1920px] flex-col overflow-hidden bg-[#f1f0ee] font-['Noto_Sans','Open_Sans',sans-serif]">
      <header className="flex h-6 shrink-0 items-center bg-linear-to-b from-[#5f5b51] via-[#504d46] to-[#3e3d38] text-[#dfdbd2]">
        <h1 className="ml-[6px] w-[380px] text-[14.500px]/6 font-bold tracking-[0.09px] whitespace-nowrap">
          Final_presentation_fuqi.odp - LibreOffice Impress
        </h1>
        <div className="ml-auto flex items-center">
          <svg width="18" height="18" viewBox="0 0 18 18" className="mr-[13px]">
            <path d="M5 1l5 5H7v7H3V6H0zM13 17l-5-5h3V5h4v7h3z" fill="#dfdbd2" />
          </svg>
          <span className="mr-[13px] h-5 w-5 rounded-[2px] bg-[#dfdbd2] text-center text-[12px]/5 font-medium text-[#3c3b37]">Sv</span>
          <svg width="18" height="14" viewBox="0 0 18 14" className="mr-[17px]">
            <path d="M0 4.500h3l4-3.500v12L3 9.500H0zM11 4.500l5 5M16 4.500l-5 5" fill="#7d7a73" stroke="#7d7a73" />
          </svg>
          <span className="mr-[12px] w-[54px] text-[14.500px]/6 tracking-[-0.2px] whitespace-nowrap">9:54 PM</span>
          <svg width="17" height="17" viewBox="0 0 17 17" className="mr-[7px]">
            <path d="M5.500 4a5.300 5.300 0 1 0 6 0" fill="none" stroke="#dfdbd2" strokeWidth="2.200" />
            <path d="M8.500 0v7.500" stroke="#dfdbd2" strokeWidth="2" />
            <path d="M0 8.500h3M14 8.500h3M2.500 14.500l2-2M14.500 14.500l-2-2M8.500 14v3M2.500 2.500l2 2M14.500 2.500l-2 2" stroke="#dfdbd2" strokeWidth="2" />
          </svg>
        </div>
      </header>

      <div className="flex min-h-0 flex-1">
        <aside className="flex w-[65px] shrink-0 flex-col border-r border-[#8a5680] bg-linear-to-r from-[#5c104d] via-[#681457] to-[#611252] pt-[6px]">
          <div className="flex flex-col gap-[7px]">
            {tiles.map((t, i) => <Tile key={i} {...t} />)}
          </div>
          <div className="mt-auto mb-[6px]">
            <Tile Icon={Trash} run={1} cls="from-[#a85596] via-[#90176f] to-[#9a3080]" />
          </div>
        </aside>

        <div className="flex min-w-0 flex-1 flex-col">
          <div className="flex h-[41px] shrink-0 items-center border-b border-[#d5d3d1] pl-[3px]">
            <Grip />
            <div className="w-2" />
            <StartShow /><Drop /><Open /><Drop /><Save /><Drop /><Sep w={9} />
            <Pdf /><Print /><Sep w={7} />
            <Cut /><Copy /><Paste /><Drop /><Brush /><Sep />
            <Undo /><Drop dim /><Undo flip /><Drop dim /><Sep w={9} />
            <Find /><Spell /><Sep w={7} />
            <Table /><Drop wide /><Image /><Film /><Chart /><Sep />
            <TextBox /><Fontwork /><Link /><Sep />
            <Dots /><GreyCursor /><Sep />
            <Display /><Drop wide /><Check /><Props /><Master /><Sep />
            <Present /><Present pause />
            <div className="flex w-[17px] pl-[7px]"><Grip /></div>
            <NewSlide /><Drop wide /><DupSlide /><DelSlide /><Sep w={7} />
            <Layout /><Drop />
          </div>
          <div className="flex h-[41px] shrink-0 items-center border-b border-[#d5d3d1] pl-[3px] shadow-[inset_0_1px_0_#fff]">
            <Grip />
            <div className="w-2" />
            <SelectBtn /><Transform /><Sep w={7} />
            <LineColor /><Drop /><FillColor /><Drop /><Sep w={9} />
            <Line /><Rect /><Oval /><Sep w={7} />
            <ArrowLine /><Drop /><Pencil /><Drop /><Connector /><Drop /><Sep />
            <Diamond /><Drop /><Smile /><Drop /><DblArrow /><Drop /><Flow /><Drop /><Callout /><Drop /><Star /><Drop /><Cube /><Drop /><Sep />
            <Arrange /><Align /><Drop dim /><Align2 /><Drop wide dim /><Distribute /><Sep />
            <Shadow /><Crop /><Wand /><Drop dim /><Sep />
            <Points /><Glue /><Extrude />
          </div>

          <div className="flex min-h-0 flex-1">
            <section className="flex w-[215px] shrink-0 flex-col border-y-2 border-r-2 border-[#3a383a] border-b-[3px]">
              <div className="flex h-[27px] shrink-0 items-center justify-between pr-[8px] pl-[3px]">
                <h2 className="text-[14.500px]/[27px] font-bold tracking-[0.1px] text-[#454340]">Slides</h2>
                <svg width="7" height="7" viewBox="0 0 7 7"><path d="M.5 .5l6 6M6.500 .5l-6 6" stroke="#4c4a48" strokeWidth="1.300" /></svg>
              </div>
              <div className="mb-[2px] ml-[2px] flex min-h-0 w-[206px] flex-1 overflow-hidden border border-[#2c2a2c] bg-white">
                <div className="-mt-[102px] ml-[6px] flex w-[185px] flex-col gap-[6px]">
                  {slides.map(([n, Body]) => <Thumb key={n} n={n} Body={Body} />)}
                </div>
                <VBar before="h-[499px]" size="h-[213px]" />
              </div>
            </section>
            <div className="relative flex w-[6px] shrink-0 flex-col border-r-2 border-b-[3px] border-[#3a383a]">
              <div className="h-[2px] bg-[#3a383a]" />
              <div className="absolute top-[440px] -left-[3px] flex h-[73px] w-[7px] items-center bg-[#8d8c8b] pl-px">
                <svg width="5" height="8" viewBox="0 0 5 8"><path d="M5 0L0 4l5 4z" fill="#fff" /></svg>
              </div>
            </div>

            <main className="flex min-w-0 flex-1 flex-col border-b border-[#2c2a2c]">
              <div className="flex min-h-0 flex-1">
                <div className="flex min-w-0 flex-1 items-start pt-[14px] pl-[197px]">
                  <article className="h-[908px] w-[1210px] border border-[#919191] bg-white shadow-[2px_2px_5px_1px_rgba(0,0,0,0.4)]">
                    <h2 className="mt-[67px] ml-[59px] font-['DejaVu_Sans',sans-serif] text-[30px]/10 tracking-[0.08px] text-black">Improvement</h2>
                    <div className="mt-[43px] ml-[60px]"><Dotted /></div>
                    <p className="mt-[83px] ml-[168px] font-['Liberation_Sans',sans-serif] text-[30px]/10 tracking-[0.075px] whitespace-nowrap text-black">
                      Our improvements mainly focus on overlapping genes.
                    </p>
                    <div className="mt-[123px] ml-[348px]"><Codons /></div>
                    <div className="mt-[260px] ml-[60px]"><Dotted /></div>
                    <svg width="16" height="29" viewBox="0 0 16 29" className="mt-[9px] ml-[59px] block">
                      <path d="M0 3l16 12.500L0 28.500z" fill="#9a9a9a" />
                      <path d="M0 0l16 13L0 25.500z" fill="#9fb8cd" />
                    </svg>
                  </article>
                </div>
                <VBar before="h-[220px]" size="h-[473px]" />
              </div>
              <HBar />
            </main>
            <div className="relative flex w-2 shrink-0 flex-col border-t-2 border-b-[3px] border-l-2 border-[#3a383a]">
              <div className="absolute top-[438px] -left-[2px] flex h-[73px] w-2 items-center bg-[#8d8c8b] pl-px">
                <svg width="5" height="8" viewBox="0 0 5 8"><path d="M5 0L0 4l5 4z" fill="#fff" /></svg>
              </div>
            </div>
          </div>

          <footer className="flex h-5 shrink-0 text-[12.500px]/[21px] text-[#45423f]">
            <StatusSep cls="ml-[617px]" />
            <svg width="14" height="14" viewBox="0 0 14 14" className="mt-[3px] ml-[9px]" fill="none">
              <path d="M0 3.500h5M2.500 1v5" stroke={B} />
              <path d="M6 3.500h7.500v9h-11V8" stroke={D} />
            </svg>
            <span className="ml-[7px] w-[182px] tracking-[-0.25px]">-1.70 / 4.32</span>
            <svg width="14" height="14" viewBox="0 0 14 14" className="mt-[3px]" fill="none">
              <path d="M5 1.500h8M4.500 0v3M13.500 0v3M1.500 5v8M0 4.500h3M0 13.500h3" stroke={B} />
              <path d="M4.500 5.500h9v7h-9zM4.500 8h9" stroke={D} />
            </svg>
            <span className="ml-[7px] w-[179px] tracking-[-0.4px]">0.00 x 0.00</span>
            <StatusSep />
            <svg width="11" height="11" viewBox="0 0 11 11" className="mt-[5px] ml-[6px]" fill="none">
              <path d="M.5 .5h8l2 2v8H.5zM3 .5v3h5v-3M3 10V6.500h5V10" stroke={G} />
            </svg>
            <StatusSep cls="ml-[4px]" />
            <StatusSep cls="ml-[29px]" />
            <span className="ml-[3px] w-[77px] tracking-[-0.33px] whitespace-nowrap">Slide 21 of 30</span>
            <StatusSep />
            <span className="ml-[7px] tracking-[-0.4px]">Blank Slide</span>
            <StatusSep cls="ml-auto" />
            <svg width="12" height="12" viewBox="0 0 12 12" className="mt-[4px] ml-[7px]">
              <path d="M6 0l2 2.500H4zM6 12l2-2.500H4zM0 6l2.500-2v4zM12 6L9.500 4v4zM5 5h2v2H5z" fill={D} />
            </svg>
            <StatusSep cls="ml-[3px]" />
            <div className="flex h-[22px] items-center">
              <i className="ml-[10px] h-px w-[7px] bg-[#45423f]" />
              <i className="ml-[7px] h-[2px] w-[44px] bg-[#2a2828]" />
              <i className="h-2 w-2 rounded-full border-[1.500px] border-[#3a3838] bg-[#f1f0ee]" />
              <i className="h-[2px] w-[45px] bg-[#2a2828]" />
              <svg width="7" height="7" viewBox="0 0 7 7" className="ml-[6px]"><path d="M0 3.500h7M3.500 0v7" stroke="#45423f" /></svg>
            </div>
            <StatusSep cls="ml-2" />
            <span className="mr-[6px] ml-[5px] w-[30px] tracking-[-0.5px]">126%</span>
          </footer>
        </div>
      </div>
    </div>
  );
}
